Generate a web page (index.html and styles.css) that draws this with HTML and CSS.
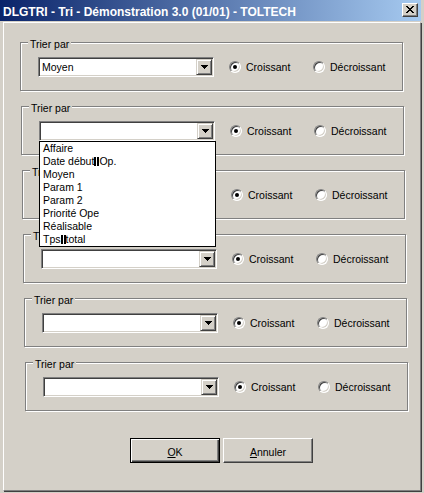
FILE: index.html
```html
<!DOCTYPE html>
<html lang="fr">
<head>
<meta charset="utf-8">
<title>DLGTRI</title>
<link rel="stylesheet" href="styles.css">
</head>
<body>
<div class="window">
  <div class="titlebar">
    <span class="title">DLGTRI - Tri - Démonstration 3.0 (01/01) - TOLTECH</span>
    <span class="close"><svg width="8" height="7" viewBox="0 0 8 7" shape-rendering="crispEdges"><path d="M0 0h2v1h-2z M6 0h2v1h-2z M1 1h2v1h-2z M5 1h2v1h-2z M2 2h4v1h-4z M3 3h2v1h-2z M2 4h4v1h-4z M1 5h2v1h-2z M5 5h2v1h-2z M0 6h2v1h-2z M6 6h2v1h-2z" fill="#000"/></svg></span>
  </div>
  <div class="client">
    <div class="group">
      <div class="legend">Trier par</div>
      <div class="row">
        <div class="combo"><span class="value">Moyen</span><span class="drop"><svg width="7" height="4" viewBox="0 0 7 4" shape-rendering="crispEdges"><path d="M0 0h7v1h-7z M1 1h5v1h-5z M2 2h3v1h-3z M3 3h1v1h-1z" fill="#000"/></svg></span></div>
        <div class="opt"><span class="radio checked"></span>Croissant</div>
        <div class="opt"><span class="radio"></span>Décroissant</div>
      </div>
    </div>
    <div class="group">
      <div class="legend">Trier par</div>
      <div class="row">
        <div class="combo"><span class="value"></span><span class="drop"><svg width="7" height="4" viewBox="0 0 7 4" shape-rendering="crispEdges"><path d="M0 0h7v1h-7z M1 1h5v1h-5z M2 2h3v1h-3z M3 3h1v1h-1z" fill="#000"/></svg></span>
          <ul class="list">
            <li>Affaire</li>
            <li>Date début<span class="tab"></span>Op.</li>
            <li>Moyen</li>
            <li>Param 1</li>
            <li>Param 2</li>
            <li>Priorité Ope</li>
            <li>Réalisable</li>
            <li>Tps<span class="tab"></span>total</li>
          </ul>
        </div>
        <div class="opt"><span class="radio checked"></span>Croissant</div>
        <div class="opt"><span class="radio"></span>Décroissant</div>
      </div>
    </div>
    <div class="group">
      <div class="legend">Trier par</div>
      <div class="row">
        <div class="combo"><span class="value"></span><span class="drop"><svg width="7" height="4" viewBox="0 0 7 4" shape-rendering="crispEdges"><path d="M0 0h7v1h-7z M1 1h5v1h-5z M2 2h3v1h-3z M3 3h1v1h-1z" fill="#000"/></svg></span></div>
        <div class="opt"><span class="radio checked"></span>Croissant</div>
        <div class="opt"><span class="radio"></span>Décroissant</div>
      </div>
    </div>
    <div class="group">
      <div class="legend">Trier par</div>
      <div class="row">
        <div class="combo"><span class="value"></span><span class="drop"><svg width="7" height="4" viewBox="0 0 7 4" shape-rendering="crispEdges"><path d="M0 0h7v1h-7z M1 1h5v1h-5z M2 2h3v1h-3z M3 3h1v1h-1z" fill="#000"/></svg></span></div>
        <div class="opt"><span class="radio checked"></span>Croissant</div>
        <div class="opt"><span class="radio"></span>Décroissant</div>
      </div>
    </div>
    <div class="group">
      <div class="legend">Trier par</div>
      <div class="row">
        <div class="combo"><span class="value"></span><span class="drop"><svg width="7" height="4" viewBox="0 0 7 4" shape-rendering="crispEdges"><path d="M0 0h7v1h-7z M1 1h5v1h-5z M2 2h3v1h-3z M3 3h1v1h-1z" fill="#000"/></svg></span></div>
        <div class="opt"><span class="radio checked"></span>Croissant</div>
        <div class="opt"><span class="radio"></span>Décroissant</div>
      </div>
    </div>
    <div class="group">
      <div class="legend">Trier par</div>
      <div class="row">
        <div class="combo"><span class="value"></span><span class="drop"><svg width="7" height="4" viewBox="0 0 7 4" shape-rendering="crispEdges"><path d="M0 0h7v1h-7z M1 1h5v1h-5z M2 2h3v1h-3z M3 3h1v1h-1z" fill="#000"/></svg></span></div>
        <div class="opt"><span class="radio checked"></span>Croissant</div>
        <div class="opt"><span class="radio"></span>Décroissant</div>
      </div>
    </div>
    <div class="buttons">
      <div class="btn default"><u>O</u>K</div>
      <div class="btn"><u>A</u>nnuler</div>
    </div>
  </div>
</div>
</body>
</html>
```
FILE: styles.css
```css
html, body {
  margin: 0;
  padding: 0;
  background: #d4d0c8;
}

.window {
  width: 424px;
  height: 493px;
  box-sizing: border-box;
  background: #d4d0c8;
  font-family: "Liberation Sans", Arial, sans-serif;
  font-size: 10.5px;
  color: #000;
  overflow: hidden;
}

.titlebar {
  width: 421px;
  height: 21px;
  display: flex;
  align-items: flex-start;
  background: linear-gradient(to right, #0a246a, #a6caf0);
}

.title {
  flex: 1;
  padding-left: 3px;
  color: #fff;
  font-weight: bold;
  font-size: 12px;
  line-height: 24px;
  white-space: nowrap;
}

.close {
  width: 16px;
  height: 14px;
  margin: 3px 3px 0 0;
  box-sizing: border-box;
  background: #d4d0c8;
  border: 1px solid;
  border-color: #fff #404040 #404040 #fff;
  box-shadow: inset -1px -1px #808080;
  display: flex;
  align-items: center;
  justify-content: center;
  padding: 0 1px 1px 0;
}

.client {
  width: 418px;
  height: 469px;
  margin: 1px 0 0 3px;
  box-sizing: border-box;
  border: 1px solid;
  border-color: #fff #808080 #808080 #fff;
  box-shadow: 1px 1px #404040;
  padding-top: 19px;
}

.group {
  box-sizing: border-box;
  width: 383px;
  height: 49px;
  margin-left: 16px;
  margin-bottom: 15px;
  border: 1px solid #808080;
  box-shadow: inset 1px 1px #fff, 1px 1px #fff;
  padding-left: 17px;
}

.group:nth-child(2) { margin-left: 17px; }
.group:nth-child(3) { margin-left: 18px; }
.group:nth-child(4) { margin-left: 19px; }
.group:nth-child(5) { margin-left: 20px; }
.group:nth-child(6) { margin-left: 21px; }

.legend {
  width: fit-content;
  margin: -5px 0 0 -10px;
  padding: 0 2px;
  background: #d4d0c8;
  line-height: 13px;
}

.row {
  margin-top: 6px;
  height: 20px;
  display: flex;
  align-items: center;
}

.combo {
  position: relative;
  width: 176px;
  height: 20px;
  flex: none;
  box-sizing: border-box;
  border: 1px solid;
  border-color: #808080 #fff #fff #808080;
  box-shadow: inset 1px 1px #404040, inset -1px -1px #d4d0c8;
  background: #fff;
  padding: 1px;
  display: flex;
}

.value {
  flex: 1;
  padding-left: 2px;
  line-height: 16px;
}

.drop {
  width: 16px;
  height: 16px;
  box-sizing: border-box;
  background: #d4d0c8;
  border: 1px solid;
  border-color: #d4d0c8 #404040 #404040 #d4d0c8;
  box-shadow: inset 1px 1px #fff, inset -1px -1px #808080;
  display: flex;
  align-items: center;
  justify-content: center;
}

.opt {
  display: flex;
  align-items: center;
  flex: none;
}

.opt:nth-child(2) {
  margin-left: 15px;
  width: 84px;
}

.radio {
  position: relative;
  width: 12px;
  height: 12px;
  flex: none;
  box-sizing: border-box;
  border-radius: 50%;
  border: 1px solid;
  border-color: #808080 #fff #fff #808080;
  box-shadow: inset 1px 1px #404040, inset -1px -1px #d4d0c8;
  background: #fff;
  margin-right: 5px;
}

.radio.checked::after {
  content: "";
  position: absolute;
  left: 3px;
  top: 3px;
  width: 4px;
  height: 4px;
  border-radius: 50%;
  background: #000;
}

.list {
  position: absolute;
  left: -1px;
  top: calc(100% + 1px);
  z-index: 2;
  width: 177px;
  box-sizing: border-box;
  margin: 0;
  padding: 0;
  list-style: none;
  background: #fff;
  border: 1px solid #000;
}

.list li {
  height: 13px;
  line-height: 13px;
  padding-left: 3px;
  white-space: nowrap;
}

.tab {
  display: inline-block;
  width: 1px;
  height: 9px;
  border-left: 2px solid #000;
  border-right: 2px solid #000;
  vertical-align: -1px;
}

.buttons {
  display: flex;
  gap: 3px;
  margin: 27px 0 0 126px;
}

.btn {
  width: 90px;
  height: 25px;
  box-sizing: border-box;
  background: #d4d0c8;
  border: 1px solid;
  border-color: #fff #404040 #404040 #fff;
  box-shadow: inset -1px -1px #808080;
  display: flex;
  align-items: center;
  justify-content: center;
  padding-top: 2px;
}

.btn.default {
  border-color: #000;
  box-shadow: inset 1px 1px #fff, inset -1px -1px #404040, inset -2px -2px #808080;
}

.btn u {
  text-decoration-thickness: 1px;
  text-underline-offset: 1px;
}
```
